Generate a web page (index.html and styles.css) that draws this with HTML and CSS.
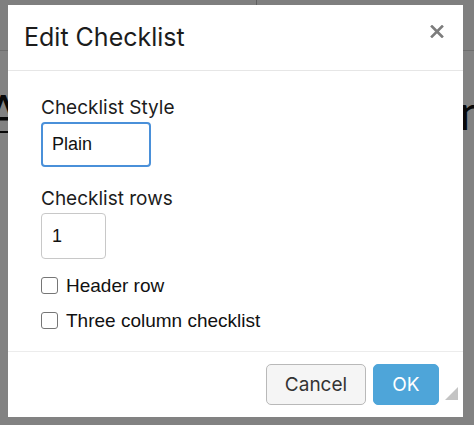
FILE: index.html
```html
<!DOCTYPE html>
<html>
<head>
<meta charset="utf-8">
<link rel="stylesheet" href="styles.css">
</head>
<body>
<div class="page">
  <div class="topbar">
    <div class="topbar-left"></div>
    <div class="topbar-right"><span class="top-title">MEETING</span></div>
  </div>
  <h1 class="heading"><span class="heading-start">Agenda</span><span class="heading-end">Plan</span></h1>
  <p class="para">Members present and apologies for absence were noted as</p>
  <p class="para para-low">Declarations of interest in the items on this agenda are c</p>
  <div class="quote">Our <mark>organization</mark> commits to: <mark>all</mark></div>
</div>
<div class="overlay"></div>
<div class="dialog" role="dialog">
  <div class="dlg-head">
    <h2 class="dlg-title">Edit Checklist</h2>
    <span class="dlg-close">
      <svg width="14" height="13" viewBox="0 0 14 13"><path d="M2 1.5 L12 11.5 M12 1.5 L2 11.5" stroke="#7c7c7c" stroke-width="2.6" stroke-linecap="square"/></svg>
    </span>
  </div>
  <div class="dlg-body">
    <label class="field-label">Checklist Style</label>
    <div class="input input-focus input-wide">Plain</div>
    <label class="field-label field-gap">Checklist rows</label>
    <div class="input input-narrow">1</div>
    <div class="check-list">
      <label class="check"><span class="box"></span>Header row</label>
      <label class="check"><span class="box"></span>Three column checklist</label>
    </div>
  </div>
  <div class="dlg-foot">
    <button class="btn btn-cancel">Cancel</button>
    <button class="btn btn-ok">OK</button>
    <span class="resize"></span>
  </div>
</div>
</body>
</html>
```
FILE: styles.css
```css
html, body {
  margin: 0;
  padding: 0;
}
body {
  width: 474px;
  height: 425px;
  overflow: hidden;
  position: relative;
  background: #fff;
  font-family: "Liberation Sans", Arial, sans-serif;
}
.page {
  width: 474px;
  height: 425px;
  overflow: hidden;
}
.topbar {
  height: 50px;
  display: flex;
  border-bottom: 1px solid #d8d8d8;
  background: #fafafa;
}
.topbar-left {
  width: 257px;
  border-right: 1px solid #bbb;
}
.topbar-right {
  flex: 1;
  padding-left: 110px;
}
.top-title {
  display: block;
  margin-top: -21px;
  font-size: 22px;
  font-weight: bold;
  color: #111;
  letter-spacing: 1px;
}
.heading {
  margin: 40px 0 0;
  display: flex;
  justify-content: space-between;
  font-family: Lato, sans-serif;
  font-weight: 400;
  font-size: 48px;
  line-height: 42px;
  white-space: nowrap;
  color: #111;
}
.heading-start {
  margin-left: -13px;
  text-decoration: underline;
  text-decoration-thickness: 2px;
}
.heading-end {
  margin-right: -12px;
}
.para {
  margin: 24px 0 0 20px;
  font-size: 16px;
  white-space: nowrap;
  color: #222;
}
.para-low {
  margin-top: 112px;
  padding-left: 20px;
}
.quote {
  margin: 88px 0 0 52px;
  padding-left: 6px;
  border-left: 2px solid #333;
  font-size: 18px;
  line-height: 24px;
  white-space: nowrap;
  color: #222;
}
.quote mark {
  background: #f2b8c0;
  color: #222;
}
.overlay {
  position: absolute;
  inset: 0;
  background: rgba(0, 0, 0, 0.49);
}
.dialog {
  position: absolute;
  left: 8px;
  top: 5px;
  width: 455px;
  height: 412px;
  background: #fff;
  display: flex;
  flex-direction: column;
  font-family: Inter, "Liberation Sans", sans-serif;
  color: #1c1c1c;
}
.dlg-head {
  height: 66px;
  box-sizing: border-box;
  border-bottom: 1px solid #e6e6e6;
  display: flex;
  align-items: center;
  justify-content: space-between;
  padding: 0 19px 1px 16px;
}
.dlg-title {
  margin: 0;
  font-size: 25px;
  font-weight: 400;
  letter-spacing: 0px;
}
.dlg-close {
  display: flex;
  margin-bottom: 11px;
}
.dlg-body {
  flex: 1;
  display: flex;
  flex-direction: column;
  align-items: flex-start;
  padding: 26px 33px 0;
  border-bottom: 1px solid #ececec;
}
.field-label {
  font-size: 19px;
  line-height: 22px;
  margin-bottom: 3px;
}
.field-gap {
  margin-top: 21px;
  margin-bottom: 3px;
}
.input {
  box-sizing: border-box;
  height: 45px;
  border-radius: 4px;
  border: 1px solid #c8c8c8;
  display: flex;
  align-items: center;
  padding-left: 10px;
  font-family: "Liberation Sans", Arial, sans-serif;
  font-size: 18px;
  color: #111;
}
.input-focus {
  border: 2px solid #4a90d9;
  padding-left: 9px;
}
.input-wide {
  width: 110px;
}
.input-narrow {
  width: 65px;
  height: 46px;
}
.check-list {
  display: flex;
  flex-direction: column;
  gap: 18px;
  margin-top: 18px;
}
.check {
  display: flex;
  align-items: center;
  gap: 8px;
  height: 17px;
  font-family: "Liberation Sans", Arial, sans-serif;
  font-size: 19px;
  color: #111;
}
.box {
  box-sizing: border-box;
  width: 17px;
  height: 17px;
  border: 1px solid #767676;
  border-radius: 3px;
  background: #fff;
}
.dlg-foot {
  height: 65px;
  display: flex;
  align-items: center;
  justify-content: flex-end;
  padding: 0 24px 0 0;
  gap: 7px;
  position: relative;
}
.btn {
  height: 41px;
  border-radius: 5px;
  font-family: Inter, "Liberation Sans", sans-serif;
  font-size: 19px;
  padding: 0;
  box-sizing: border-box;
}
.btn-cancel {
  width: 100px;
  background: #f5f5f5;
  border: 1px solid #b9b9b9;
  color: #333;
}
.btn-ok {
  width: 66px;
  background: #4ea5d9;
  border: 1px solid #4ea5d9;
  color: #fff;
}
.resize {
  position: absolute;
  right: 5px;
  bottom: 17px;
  width: 0;
  height: 0;
  border-left: 13px solid transparent;
  border-bottom: 13px solid #c4c4c4;
}
```
